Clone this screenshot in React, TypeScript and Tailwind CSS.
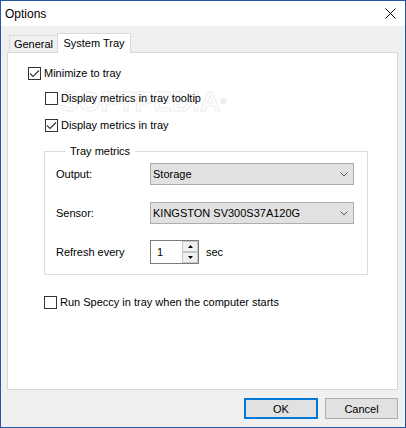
import React from "react";

function Box({ checked }: { checked: boolean }) {
  return (
    <span className="w-[13px] h-[13px] border border-[#333333] bg-white flex items-center justify-center shrink-0">
      {checked && (
        <svg width="11" height="11" viewBox="0 0 11 11">
          <path d="M1 5.5 L4 8.5 L10 2.5" fill="none" stroke="#333333" strokeWidth="1.1" />
        </svg>
      )}
    </span>
  );
}

function CheckRow({ checked, label, className }: { checked: boolean; label: string; className: string }) {
  return (
    <div className={"flex items-center h-[13px] " + className}>
      <Box checked={checked} />
      <span className="ml-[3px] leading-[13px]">{label}</span>
    </div>
  );
}

function Chevron() {
  return (
    <svg width="8" height="5" viewBox="0 0 8 5">
      <path d="M0.5 0.5 L4 4 L7.5 0.5" fill="none" stroke="#555555" strokeWidth="1" />
    </svg>
  );
}

function Dropdown({ value }: { value: string }) {
  return (
    <div className="w-[204px] h-[22px] bg-[#e1e1e1] border border-[#adadad] flex items-center justify-between pl-[2px] pr-[5px]">
      <span className="leading-[14px]">{value}</span>
      <Chevron />
    </div>
  );
}

export default function App() {
  return (
    <div className="w-[406px] h-[428px] border border-[#2557a7] flex flex-col font-['Liberation_Sans',Arial,sans-serif] text-[11px] text-black bg-[#f0f0f0]">
      <div className="h-[25px] bg-white flex items-center justify-between pl-[4px] pr-[9px] shrink-0">
        <span className="text-[12px] leading-[16px]">Options</span>
        <svg width="11" height="11" viewBox="0 0 11 11">
          <path d="M0.5 0.5 L10.5 10.5 M10.5 0.5 L0.5 10.5" stroke="#000000" strokeWidth="1" />
        </svg>
      </div>
      <div className="flex-1 flex flex-col pt-[7px] pl-[6px] pr-[7px]">
        <div className="flex items-end h-[19px] ml-[2px]">
          <div className="w-[49px] h-[17px] border-l border-t border-r border-[#d9d9d9] bg-[#f0f0f0] flex items-center justify-center leading-[14px]">
            General
          </div>
          <div className="w-[74px] h-[20px] -ml-px -mb-px relative z-10 border-l border-t border-r border-[#d9d9d9] bg-white flex items-center justify-center leading-[14px] pb-[1px]">
            System Tray
          </div>
        </div>
        <div className="h-[338px] border border-[#d9d9d9] bg-white relative isolate">
          <div className="absolute left-[52px] top-[34px] z-0 text-[28px] font-bold leading-[30px] text-white [-webkit-text-stroke:1px_#eeeeee] select-none pointer-events-none">
            SOFTPEDIA<span className="text-[8px] align-top">®</span>
          </div>
          <div className="relative z-10 flex flex-col items-start pt-[14px] pl-[20px]">
            <CheckRow checked={true} label="Minimize to tray" className="" />
            <CheckRow checked={false} label="Display metrics in tray tooltip" className="ml-[17px] mt-[12px]" />
            <CheckRow checked={true} label="Display metrics in tray" className="ml-[17px] mt-[14px]" />
          </div>
          <fieldset className="relative z-10 border border-[#dcdcdc] w-[324px] ml-[36px] mt-[12px] pl-[11px] pr-[13px] pb-[10px]">
            <legend className="ml-[9px] px-[5px] leading-[14px]">Tray metrics</legend>
            <div className="flex items-center h-[22px] mt-[5px]">
              <span className="w-[94px]">Output:</span>
              <Dropdown value="Storage" />
            </div>
            <div className="flex items-center h-[22px] mt-[17px]">
              <span className="w-[94px]">Sensor:</span>
              <Dropdown value="KINGSTON SV300S37A120G" />
            </div>
            <div className="flex items-center h-[24px] mt-[16px]">
              <span className="w-[94px]">Refresh every</span>
              <div className="w-[49px] h-[24px] border border-[#7a7a7a] bg-white flex">
                <div className="flex-1 flex items-center pl-[6px] leading-[14px]">1</div>
                <div className="w-[16px] flex flex-col">
                  <div className="h-[11px] border border-[#c6c6c6] bg-[#f0f0f0] flex items-center justify-center">
                    <svg width="5" height="3" viewBox="0 0 5 3">
                      <path d="M2.5 0 L5 3 L0 3 Z" fill="#000000" />
                    </svg>
                  </div>
                  <div className="h-[11px] border border-[#c6c6c6] bg-[#f0f0f0] flex items-center justify-center">
                    <svg width="5" height="3" viewBox="0 0 5 3">
                      <path d="M0 0 L5 0 L2.5 3 Z" fill="#000000" />
                    </svg>
                  </div>
                </div>
              </div>
              <span className="ml-[7px]">sec</span>
            </div>
          </fieldset>
          <div className="relative z-10 flex flex-col items-start">
            <CheckRow checked={false} label="Run Speccy in tray when the computer starts" className="ml-[36px] mt-[21px]" />
          </div>
        </div>
        <div className="flex justify-end gap-[7px] mt-[8px]">
          <div className="w-[74px] h-[21px] border-2 border-[#0078d7] bg-[#e1e1e1] flex items-center justify-center leading-[14px]">
            OK
          </div>
          <div className="w-[73px] h-[21px] border border-[#adadad] bg-[#e1e1e1] flex items-center justify-center leading-[14px]">
            Cancel
          </div>
        </div>
      </div>
    </div>
  );
}
